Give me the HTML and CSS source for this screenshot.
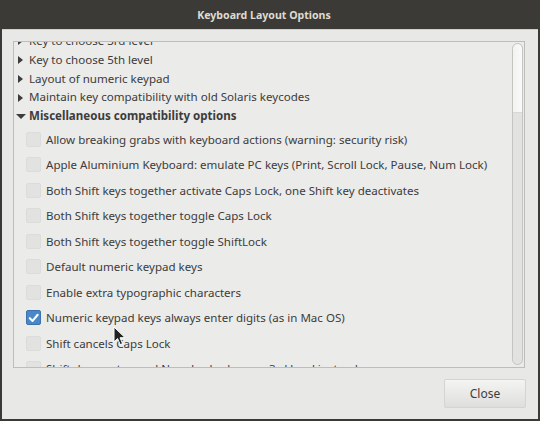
FILE: index.html
```html
<!DOCTYPE html>
<html>
<head>
<meta charset="utf-8">
<link rel="stylesheet" href="styles.css">
</head>
<body>
<div class="window">
  <div class="titlebar">Keyboard Layout Options</div>
  <div class="content">
    <div class="frame">
      <div class="list">
        <div class="tree-row"><span class="arrow right"></span>Key to choose 3rd level</div>
        <div class="tree-row"><span class="arrow right"></span>Key to choose 5th level</div>
        <div class="tree-row"><span class="arrow right"></span>Layout of numeric keypad</div>
        <div class="tree-row"><span class="arrow right"></span>Maintain key compatibility with old Solaris keycodes</div>
        <div class="tree-row bold"><span class="arrow down"></span>Miscellaneous compatibility options</div>
        <div class="checks">
          <div class="check-row"><span class="box"></span>Allow breaking grabs with keyboard actions (warning: security risk)</div>
          <div class="check-row"><span class="box"></span>Apple Aluminium Keyboard: emulate PC keys (Print, Scroll Lock, Pause, Num Lock)</div>
          <div class="check-row"><span class="box"></span>Both Shift keys together activate Caps Lock, one Shift key deactivates</div>
          <div class="check-row"><span class="box"></span>Both Shift keys together toggle Caps Lock</div>
          <div class="check-row"><span class="box"></span>Both Shift keys together toggle ShiftLock</div>
          <div class="check-row"><span class="box"></span>Default numeric keypad keys</div>
          <div class="check-row"><span class="box"></span>Enable extra typographic characters</div>
          <div class="check-row"><span class="box checked"><svg width="14" height="14" viewBox="0 0 14 14"><path d="M3 7.2 L6 10.2 L11.5 3.5" fill="none" stroke="#fff" stroke-width="2.2" stroke-linecap="round" stroke-linejoin="round"/></svg></span>Numeric keypad keys always enter digits (as in Mac OS)</div>
          <div class="check-row"><span class="box"></span>Shift cancels Caps Lock</div>
          <div class="check-row"><span class="box"></span>Shift does not cancel Num Lock, chooses 3rd level instead</div>
        </div>
      </div>
      <div class="scrollbar"><div class="thumb"></div></div>
    </div>
    <div class="actions">
      <button class="btn">Close</button>
    </div>
  </div>
  <svg class="cursor" width="14" height="20" viewBox="0 0 14 20"><path d="M1 1 L1 16 L4.6 12.6 L7.2 18.6 L9.6 17.6 L7 11.8 L12 11.6 Z" fill="#222" stroke="#fff" stroke-width="1" stroke-linejoin="round"/></svg>
</div>
</body>
</html>
```
FILE: styles.css
```css
html, body {
  margin: 0;
  padding: 0;
}
body {
  width: 540px;
  height: 421px;
  overflow: hidden;
  font-family: "Noto Sans", "Open Sans", sans-serif;
  font-size: 11.55px;
  color: #3c3c3c;
}
.window {
  position: relative;
  width: 540px;
  height: 421px;
  box-sizing: border-box;
  background: #3b3a36;
  padding: 0 2px 2px 2px;
  display: flex;
  flex-direction: column;
}
.titlebar {
  height: 29px;
  line-height: 30px;
  text-align: center;
  color: #dfdbd2;
  font-weight: bold;
  font-size: 10.6px;
  padding-right: 12px;
  flex: none;
}
.content {
  flex: 1;
  background: #e8e8e6;
  padding: 11px 13px 0 11px;
  display: flex;
  flex-direction: column;
  border-top: 1px solid #cfcfcc;
}
.frame {
  height: 325px;
  border: 1px solid #bdbdba;
  background: #ebebe9;
  display: flex;
  overflow: hidden;
  flex: none;
}
.list {
  flex: 1;
  overflow: hidden;
}
.tree-row {
  height: 18.75px;
  line-height: 18.75px;
  display: flex;
  align-items: center;
  padding-left: 4px;
  white-space: nowrap;
}
.tree-row:first-child {
  margin-top: -10px;
}
.bold {
  font-weight: bold;
}
.arrow {
  width: 0;
  height: 0;
  flex: none;
}
.arrow.right {
  border-top: 4px solid transparent;
  border-bottom: 4px solid transparent;
  border-left: 5px solid #3c3c3c;
  margin-right: 6px;
}
.arrow.down {
  margin-left: -2px;
  border-left: 5px solid transparent;
  border-right: 5px solid transparent;
  border-top: 5px solid #3c3c3c;
  margin-right: 3px;
}
.checks {
  padding-top: 0.5px;
}
.check-row {
  height: 25.5px;
  display: flex;
  align-items: center;
  padding-left: 12px;
  white-space: nowrap;
}
.box {
  width: 13px;
  height: 13px;
  border-radius: 2px;
  background: #e2e2e0;
  border: 1px solid #dcdcda;
  margin-right: 5px;
  flex: none;
  display: flex;
  align-items: center;
  justify-content: center;
}
.box.checked {
  background: #4a87c8;
  border-color: #3b72ad;
}
.box.checked svg {
  display: block;
}
.scrollbar {
  width: 9px;
  margin: 1px 1px 2px 0;
  border: 1px solid #c4c4c1;
  border-radius: 6px;
  background: #e2e2e0;
  flex: none;
  overflow: hidden;
}
.thumb {
  height: 68px;
  background: linear-gradient(to right, #f2f2f1, #fafafa);
  border-bottom: 1px solid #d8d8d6;
  border-radius: 6px 6px 0 0;
}
.actions {
  display: flex;
  justify-content: flex-end;
  padding-top: 11px;
}
.btn {
  width: 82px;
  height: 29px;
  font-family: "Noto Sans", "Open Sans", sans-serif;
  font-size: 12px;
  color: #3c3c3c;
  border: 1px solid #d4d4d2;
  border-radius: 2px;
  background: linear-gradient(to bottom, #f4f4f3, #dededc);
  padding: 0;
  margin-right: -1px;
}
.cursor {
  position: absolute;
  left: 113px;
  top: 326px;
}
```
